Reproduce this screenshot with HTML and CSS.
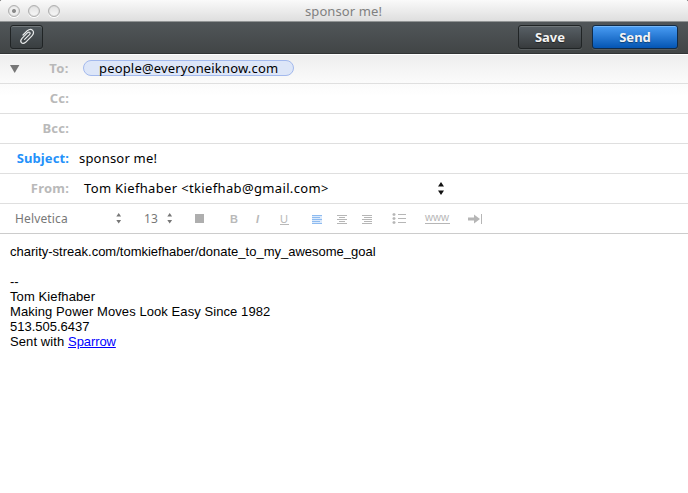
FILE: index.html
```html
<!DOCTYPE html>
<html lang="en">
<head>
<meta charset="utf-8">
<title>sponsor me!</title>
<link rel="stylesheet" href="styles.css">
</head>
<body>
<div class="window">
  <header class="titlebar">
    <div class="lights"><i class="light edited"></i><i class="light"></i><i class="light"></i></div>
    <span class="title">sponsor me!</span>
  </header>
  <div class="toolbar">
    <button class="btn attach" aria-label="Attach">
      <svg width="18" height="20" viewBox="0 0 18 20" fill="none" stroke="#e8eaeb" stroke-width="1.2" stroke-linecap="round" stroke-linejoin="round"><path d="M6.6 12.4 L11.5 7.6 C13.2 5.7 11.3 4.2 9.6 5.7 L4 11.4 C1 14.7 4.2 18.2 7.6 15.3 L13.7 9.2 C18 4.5 13.3 .2 9.3 3.7 L5 8"/></svg>
    </button>
    <button class="btn save">Save</button>
    <button class="btn send">Send</button>
  </div>
  <div class="row to"><svg class="disclosure" width="10" height="8" viewBox="0 0 10 8"><path d="M0 0H9.4L4.7 8Z" fill="#777"/></svg><span class="label">To:</span><span class="pill">people@everyoneiknow.com</span></div>
  <div class="row cc"><span class="label">Cc:</span></div>
  <div class="row"><span class="label">Bcc:</span></div>
  <div class="row"><span class="label active">Subject:</span><span class="value subject">sponsor me!</span></div>
  <div class="row"><span class="label">From:</span><span class="value from">Tom Kiefhaber &lt;tkiefhab@gmail.com&gt;</span>
    <svg class="stepper" width="6" height="13" viewBox="0 0 6 13"><path d="M0 4.5L3 0L6 4.5ZM0 8.5H6L3 13Z" fill="#111"/></svg>
  </div>
  <div class="row format">
    <span class="font-name">Helvetica</span>
    <svg class="step" width="6" height="11" viewBox="0 0 6 11"><path d="M.3 3.6L2.7 0L5.1 3.6ZM.3 7H5.1L2.7 10.6Z" fill="#777"/></svg>
    <span class="font-size">13</span>
    <svg class="step" width="6" height="11" viewBox="0 0 6 11"><path d="M.3 3.6L2.7 0L5.1 3.6ZM.3 7H5.1L2.7 10.6Z" fill="#777"/></svg>
    <i class="swatch"></i>
    <b class="style bold">B</b><em class="style italic">I</em><span class="style under">U</span>
    <svg class="tools" width="172" height="14" viewBox="0 -2 172 14" fill="none" stroke="#b6b6b6">
      <path fill="#dceafb" stroke="none" d="M0 1H10V10H0Z"/>
      <path stroke="#8ebbf0" d="M0 1.5H10M0 3.5H8M0 5.5H10M0 7.5H8M0 9.5H10"/>
      <path d="M25 1.5H35M27 3.5H33M25 5.5H35M27 7.5H33M25 9.5H35"/>
      <path d="M50 1.5H60M52 3.5H60M50 5.5H60M52 7.5H60M50 9.5H60"/>
      <path d="M86 .5H94M86 4.5H94M86 8.5H94"/>
      <path fill="#b6b6b6" stroke="none" transform="translate(0 -1)" d="M81 .3h2v.5h.5v1.5H83v.5h-2v-.5h-.5V.8h.5zM81 4.3h2v.5h.5v1.5H83v.5h-2v-.5h-.5V4.8h.5zM81 8.3h2v.5h.5v1.5H83v.5h-2v-.5h-.5V8.8h.5z"/>
      <text x="113" y="7" textLength="24" lengthAdjust="spacingAndGlyphs" class="www">www</text>
      <path d="M113 9.5H138M169.5 0V10"/>
      <path fill="#b6b6b6" stroke="none" d="M156 3.5H162V.5L168 5L162 9.5V6.5H156Z"/>
    </svg>
  </div>
  <main class="message">charity-streak.com/tomkiefhaber/donate_to_my_awesome_goal<br><br>--<br><span class="name">Tom Kiefhaber</span><br><span class="tagline">Making Power Moves Look Easy Since 1982</span><br>513.505.6437<br><span class="sent">Sent with </span><a href="#">Sparrow</a></main>
</div>
</body>
</html>
```
FILE: styles.css
```css
* { box-sizing: border-box; }
body { margin: 0; background: #000; font-family: "Noto Sans", "Open Sans", sans-serif; font-size: 13px; }
.window { width: 688px; height: 493px; overflow: hidden; background: #fff; border-radius: 2px 2px 0 0; }
.titlebar { position: relative; height: 22px; background: linear-gradient(#fafafa, #dedede); border-bottom: 1px solid #919495; display: flex; justify-content: center; }
.lights { position: absolute; left: 8px; top: 5px; display: flex; gap: 8px; }
.light { width: 12px; height: 12px; border: 1px solid #b0b0b0; border-radius: 50%; background: linear-gradient(#e2e2e2, #f8f8f8); box-shadow: inset 0 0 1px #aaa, 0 1px 0 #fff; }
.edited { background: radial-gradient(circle, #888 0 1.5px, #eee 2.4px); }
.title { color: #808080; line-height: 22px; letter-spacing: .1px; margin-right: 1px; }
.toolbar { height: 32px; padding: 3px 10px 4px; display: flex; background: linear-gradient(#515659, #414546); border-bottom: 1px solid #313435; }
.btn { height: 24px; padding: 0; border: 1px solid #202425; border-radius: 3px; background: linear-gradient(#586066, #373b3d); box-shadow: inset 0 1px 0 #71777a, 0 1px 0 #585d5f; color: #f4f4f4; font: bold 13px/21px "Noto Sans", sans-serif; text-shadow: 0 1px 1px #222; }
.attach { width: 33px; display: flex; align-items: center; justify-content: center; background: linear-gradient(#4e565b, #393e40); }
.save { width: 64px; margin-left: auto; margin-right: 10px; }
.send { width: 86px; border-color: #122b46; background: linear-gradient(#4a9df4, #0455b3); box-shadow: inset 0 1px 0 #76b8fa, 0 1px 0 #585d5f; text-shadow: 0 1px 1px #114275; }
.row { height: 30px; padding-bottom: 1px; border-bottom: 1px solid #dfdfdf; display: flex; align-items: center; position: relative; white-space: nowrap; }
.to { padding-bottom: 0; background: linear-gradient(#fff 1px, #eee 1px, #fbfbfb); }
.cc { background: linear-gradient(#fbfbfb, #fff 12px); }
.label { width: 69px; text-align: right; color: #b9b9b9; font-weight: bold; line-height: 18px; padding-bottom: 1px; letter-spacing: .2px; }
.active { color: #2491fa; letter-spacing: .1px; }
.disclosure { margin-left: 10px; }
.to .label { width: 49px; letter-spacing: .5px; }
.pill { height: 16px; width: 211px; margin-left: 14px; margin-top: -1px; padding-left: 15px; border: 1px solid #a3b9ed; border-radius: 8px; background: #dde6f8; line-height: 14px; color: #000; letter-spacing: .17px; }
.value { color: #000; line-height: 18px; padding-bottom: 1px; }
.subject { margin-left: 10px; letter-spacing: .2px; }
.from { width: 245px; margin-left: 15px; letter-spacing: .35px; }
.stepper { margin-left: 109px; }
.format { padding-bottom: 0; color: #777; border-color: #ccc; font-size: 12px; }
.font-name { margin-left: 15px; width: 100px; letter-spacing: .15px; }
.font-size { width: 18px; margin-left: 22px; letter-spacing: .1px; }
.font-name, .font-size { line-height: 20px; }
.step { margin-left: 1px; }
.font-size + .step { margin-left: 5px; }
.swatch { width: 9px; height: 9px; margin-left: 22px; background: #aeaeae; }
.style { font: bold 11px/11px "Liberation Sans", sans-serif; color: #b9b9b9; padding-top: 1px; }
.bold { margin-left: 26px; width: 26px; }
.italic { font-style: italic; width: 24px; }
.under { width: 9px; height: 12px; font-weight: normal; border-bottom: 1px solid #b9b9b9; }
.tools { margin-left: 23px; margin-top: 1px; overflow: visible; }
.www { font: 10px "Liberation Sans", sans-serif; fill: #b6b6b6; stroke: none; }
.message { padding: 10px; color: #000; font: 13px/15px "Liberation Sans", sans-serif; }
.message a { color: #00f; letter-spacing: -.1px; }
.name { letter-spacing: .1px; }
.tagline { letter-spacing: .08px; }
.sent { letter-spacing: .1px; }
```
